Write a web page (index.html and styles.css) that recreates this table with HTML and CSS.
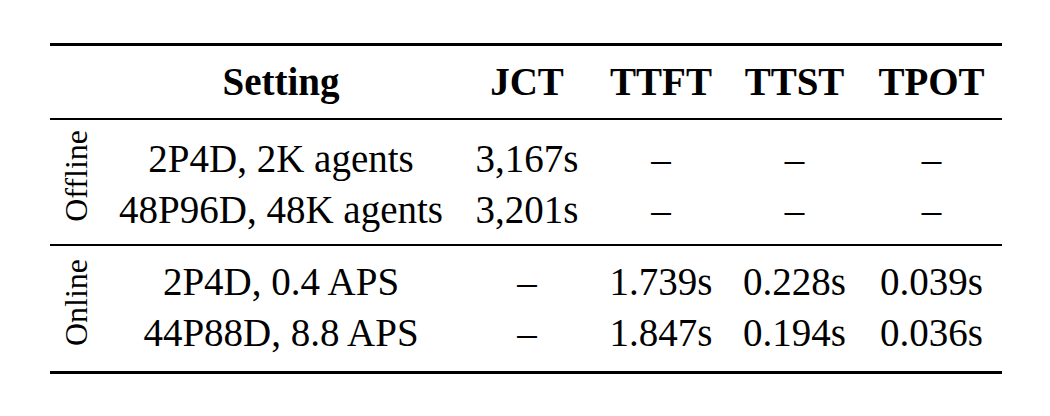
FILE: index.html
```html
<!DOCTYPE html>
<html>
<head>
    <link rel="stylesheet" href="styles.css">
</head>
<body>
    <table class="results">
        <colgroup>
            <col class="col-group">
            <col class="col-setting">
            <col class="col-jct">
            <col class="col-ttft">
            <col class="col-ttst">
            <col class="col-tpot">
        </colgroup>
        <thead>
            <tr>
                <th></th>
                <th>Setting</th>
                <th>JCT</th>
                <th>TTFT</th>
                <th>TTST</th>
                <th>TPOT</th>
            </tr>
        </thead>
        <tbody class="offline">
            <tr class="first">
                <td class="group" rowspan="2"><span class="vlabel">Offline</span></td>
                <td>2P4D, 2K agents</td>
                <td>3,167s</td>
                <td>&ndash;</td>
                <td>&ndash;</td>
                <td>&ndash;</td>
            </tr>
            <tr class="last">
                <td>48P96D, 48K agents</td>
                <td>3,201s</td>
                <td>&ndash;</td>
                <td>&ndash;</td>
                <td>&ndash;</td>
            </tr>
        </tbody>
        <tbody class="online">
            <tr class="first">
                <td class="group" rowspan="2"><span class="vlabel">Online</span></td>
                <td>2P4D, 0.4 APS</td>
                <td>&ndash;</td>
                <td>1.739s</td>
                <td>0.228s</td>
                <td>0.039s</td>
            </tr>
            <tr class="last">
                <td>44P88D, 8.8 APS</td>
                <td>&ndash;</td>
                <td>1.847s</td>
                <td>0.194s</td>
                <td>0.036s</td>
            </tr>
        </tbody>
    </table>
</body>
</html>
```

FILE: styles.css
```css
body {
    margin: 0;
    background: white;
    color: #000;
    font-family: "Liberation Serif", "Times New Roman", serif;
}

.results {
    margin: 43px 0 0 50px;
    width: 952px;
    table-layout: fixed;
    border-collapse: collapse;
    border-top: 3px solid #000;
    border-bottom: 3px solid #000;
    font-size: 39px;
    line-height: 51px;
}

.col-group { width: 52px; }
.col-setting { width: 358px; }
.col-jct { width: 134px; }
.col-ttft { width: 134px; }
.col-ttst { width: 133px; }
.col-tpot { width: 141px; }

.results th,
.results td {
    padding: 0;
    text-align: center;
    vertical-align: middle;
    white-space: nowrap;
}

.results thead {
    border-bottom: 2px solid #000;
}
.results th {
    font-weight: bold;
    padding-top: 10px;
    padding-bottom: 11px;
}

.results tbody + tbody {
    border-top: 2px solid #000;
}

.offline .first td { padding-top: 13px; }
.offline .last td { padding-bottom: 9px; }
.online .first td { padding-top: 10px; }
.online .last td { padding-bottom: 13px; }

.results td.group {
    padding: 0;
}
.vlabel {
    display: inline-block;
    writing-mode: vertical-rl;
    transform: rotate(180deg);
    font-size: 32px;
    line-height: 1;
}
```
